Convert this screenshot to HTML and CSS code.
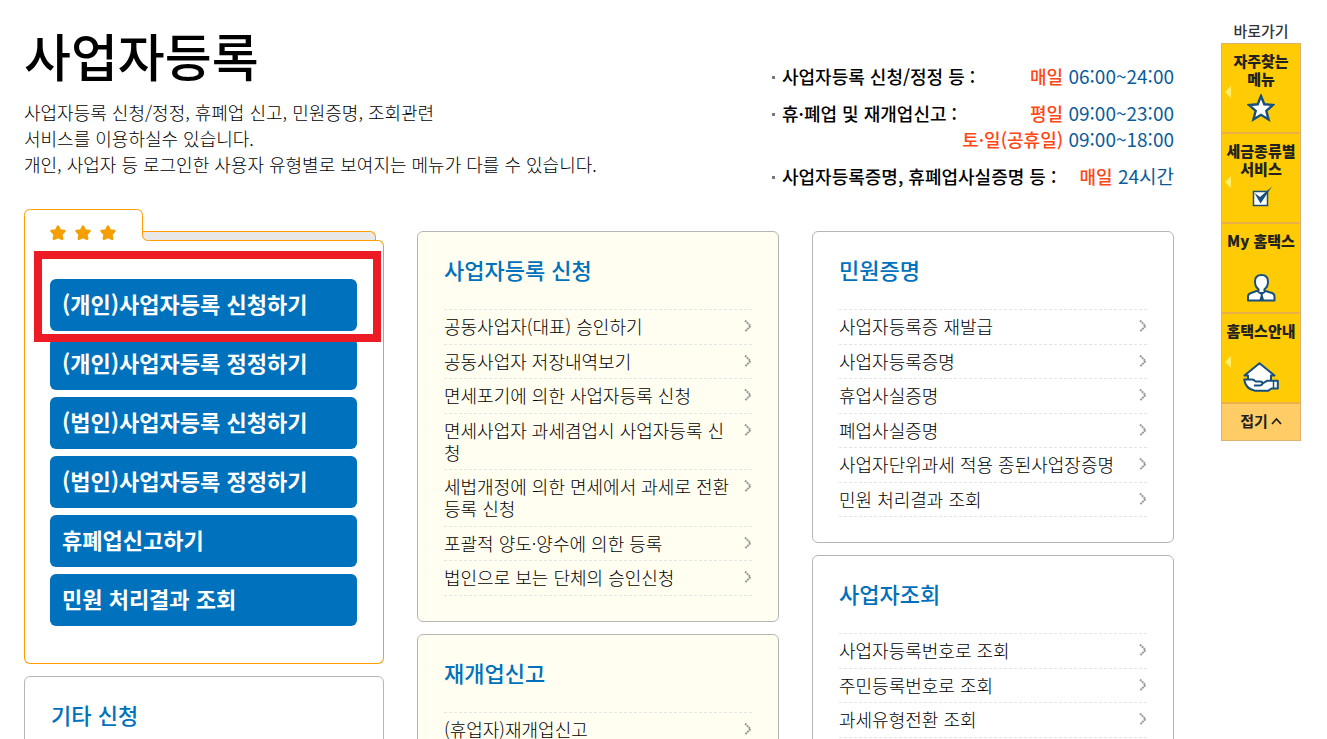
FILE: index.html
```html
<!DOCTYPE html>
<html lang="ko">
<head>
<meta charset="utf-8">
<meta name="viewport" content="width=device-width, initial-scale=1">
<title>사업자등록</title>
<link rel="stylesheet" href="styles.css">
</head>
<body>
<svg class="defs" aria-hidden="true">
  <symbol id="chevron" viewBox="0 0 8 14"><path d="M1 1.500 6.500 7 1 12.500" fill="none" stroke="#999" stroke-width="2" stroke-dasharray="2 .6"/></symbol>
  <symbol id="star" viewBox="0 0 18 18"><path d="M9 2.500 11 6.500 15.500 7 12.300 10.300 13.200 14.800 9 12.800 4.800 14.800 5.700 10.300 2.500 7 7 6.500Z" fill="#ff9c00" stroke="#f0a000" stroke-width="2.500" stroke-linejoin="round"/></symbol>
</svg>
<div class="page">
  <main class="main">
    <header class="intro">
      <div>
        <h1 class="title">사업자등록</h1>
        <p class="desc">사업자등록 신청/정정, 휴폐업 신고, 민원증명, 조회관련<br>서비스를 이용하실수 있습니다.<br>개인, 사업자 등 로그인한 사용자 유형별로 보여지는 메뉴가 다를 수 있습니다.</p>
      </div>
      <ul class="hours">
        <li><span class="hours-name">사업자등록 신청/정정 등 :</span><span class="hours-time"><em>매일</em> 06:00~24:00</span></li>
        <li><span class="hours-name">휴·폐업 및 재개업신고 :</span><span class="hours-time"><em>평일</em> 09:00~23:00</span><span class="hours-time wide"><em>토·일(공휴일)</em> 09:00~18:00</span></li>
        <li><span class="hours-name">사업자등록증명, 휴폐업사실증명 등 :</span><span class="hours-time"><em>매일</em> 24시간</span></li>
      </ul>
    </header>
    <div class="columns">
      <div class="column">
        <section class="folder">
          <div class="folder-top">
            <div class="folder-tab">
              <svg class="tab-shape" width="126" height="38" viewBox="0 0 126 38" aria-hidden="true">
                <path d="M118.500 23H126V31H123Q118.500 31 118.500 26Z" fill="#e8e8e8"/>
                <path d="M118.500 22.500H126" stroke="#ff9c00"/>
                <path d="M.5 38V6.500Q.5.5 6.500.5H112.500Q118.500.5 118.500 6.500V25.500Q118.500 31.500 124.500 31.500H126" fill="none" stroke="#ff9c00"/>
              </svg>
              <span class="stars">
                <svg width="18" height="18"><use href="#star"/></svg>
                <svg width="18" height="18"><use href="#star"/></svg>
                <svg width="18" height="18"><use href="#star"/></svg>
              </span>
            </div>
            <div class="folder-rim"><div class="folder-back"></div><div class="folder-edge"></div></div>
          </div>
          <div class="folder-body">
            <div class="highlight"><button type="button" class="action">(개인)사업자등록 신청하기</button></div>
            <button type="button" class="action">(개인)사업자등록 정정하기</button>
            <button type="button" class="action">(법인)사업자등록 신청하기</button>
            <button type="button" class="action">(법인)사업자등록 정정하기</button>
            <button type="button" class="action">휴폐업신고하기</button>
            <button type="button" class="action">민원 처리결과 조회</button>
          </div>
        </section>
        <section class="card">
          <h2 class="card-title">기타 신청</h2>
        </section>
      </div>
      <div class="column offset">
        <section class="card cream">
          <h2 class="card-title">사업자등록 신청</h2>
          <ul class="links">
            <li><a href="#">공동사업자(대표) 승인하기</a><svg class="chevron"><use href="#chevron"/></svg></li>
            <li><a href="#">공동사업자 저장내역보기</a><svg class="chevron"><use href="#chevron"/></svg></li>
            <li><a href="#">면세포기에 의한 사업자등록 신청</a><svg class="chevron"><use href="#chevron"/></svg></li>
            <li><a href="#">면세사업자 과세겸업시 사업자등록 신청</a><svg class="chevron"><use href="#chevron"/></svg></li>
            <li><a href="#">세법개정에 의한 면세에서 과세로 전환 등록 신청</a><svg class="chevron"><use href="#chevron"/></svg></li>
            <li><a href="#">포괄적 양도·양수에 의한 등록</a><svg class="chevron"><use href="#chevron"/></svg></li>
            <li><a href="#">법인으로 보는 단체의 승인신청</a><svg class="chevron"><use href="#chevron"/></svg></li>
          </ul>
        </section>
        <section class="card cream">
          <h2 class="card-title">재개업신고</h2>
          <ul class="links">
            <li><a href="#">(휴업자)재개업신고</a><svg class="chevron"><use href="#chevron"/></svg></li>
          </ul>
        </section>
      </div>
      <div class="column offset">
        <section class="card">
          <h2 class="card-title">민원증명</h2>
          <ul class="links">
            <li><a href="#">사업자등록증 재발급</a><svg class="chevron"><use href="#chevron"/></svg></li>
            <li><a href="#">사업자등록증명</a><svg class="chevron"><use href="#chevron"/></svg></li>
            <li><a href="#">휴업사실증명</a><svg class="chevron"><use href="#chevron"/></svg></li>
            <li><a href="#">폐업사실증명</a><svg class="chevron"><use href="#chevron"/></svg></li>
            <li><a href="#">사업자단위과세 적용 종된사업장증명</a><svg class="chevron"><use href="#chevron"/></svg></li>
            <li><a href="#">민원 처리결과 조회</a><svg class="chevron"><use href="#chevron"/></svg></li>
          </ul>
        </section>
        <section class="card">
          <h2 class="card-title">사업자조회</h2>
          <ul class="links">
            <li><a href="#">사업자등록번호로 조회</a><svg class="chevron"><use href="#chevron"/></svg></li>
            <li><a href="#">주민등록번호로 조회</a><svg class="chevron"><use href="#chevron"/></svg></li>
            <li><a href="#">과세유형전환 조회</a><svg class="chevron"><use href="#chevron"/></svg></li>
          </ul>
        </section>
      </div>
    </div>
  </main>
  <aside class="quick">
    <h2 class="quick-title">바로가기</h2>
    <nav class="quick-menu">
      <a href="#" class="quick-item more">
        <span>자주찾는<br>메뉴</span>
        <svg width="28" height="28" viewBox="0 0 28 28" aria-hidden="true"><path d="M14 2 17.300 10.300 26 11 19.300 16.800 21.600 25.500 14 20.800 6.400 25.500 8.700 16.800 2 11 10.700 10.300Z" fill="#fff" stroke="#17507c" stroke-width="2.400"/></svg>
      </a>
      <a href="#" class="quick-item more">
        <span>세금종류별<br>서비스</span>
        <svg width="28" height="28" viewBox="0 0 28 28" aria-hidden="true"><path d="M6.500 7.500H20.500V21.500H6.500Z" fill="#fff" stroke="#17507c" stroke-width="1.500"/><path d="M7.500 9 13 13 25 2.500 13.500 19.500Z" fill="#17507c"/></svg>
      </a>
      <a href="#" class="quick-item">
        <span>My 홈택스</span>
        <svg width="30" height="28" viewBox="0 0 30 28" aria-hidden="true"><g fill="#fff" stroke="#17507c" stroke-width="2" stroke-linejoin="round"><path d="M2 26.500V22.500Q2 20 5 19L12 16.500H18L26 19Q28.500 20 28.500 22.500V26.500Z"/><path d="M15.500 1Q22 1 22 7.500 22 13 18.500 15V18L15.500 20 12.500 18V15Q9 13 9 7.500 9 1 15.500 1Z"/></g><path d="M13.500 18H17.500L16.500 20.500 18 26H13.500L15 20.500Z" fill="#17507c"/></svg>
      </a>
      <a href="#" class="quick-item more">
        <span>홈택스안내</span>
        <svg width="36" height="30" viewBox="0 0 36 30" aria-hidden="true"><g fill="#fff" stroke="#17507c" stroke-width="2" stroke-linejoin="round"><path d="M5 22V13.500H1.500L16.500 1.200 31.500 13.500H28V22Z"/><path d="M1.200 17.500H9Q11 17.500 12.500 19.500H17Q19.500 19.500 19.500 21.500L24 18.800H34.800V26.500H28.500L25 28.800H12Q2.500 27 1.200 17.500Z"/><path d="M19.500 21.500Q19 23.500 16.500 23.500H11" fill="none"/></g><path d="M30.500 19V26" stroke="#17507c" stroke-width="1.500"/></svg>
      </a>
      <button type="button" class="quick-fold">접기<svg width="11" height="8" viewBox="0 0 11 8" aria-hidden="true"><path d="M1 7 5.500 2 10 7" fill="none" stroke="#222" stroke-width="1.800"/></svg></button>
    </nav>
  </aside>
</div>
</body>
</html>
```

FILE: styles.css
```css
* { box-sizing: border-box; }

body {
  margin: 0;
  background: #fff;
  color: #000;
  font: 300 18px/22px "Noto Sans CJK KR", sans-serif;
}

h1, h2, p, ul { margin: 0; padding: 0; }
ul { list-style: none; }
a { color: inherit; text-decoration: none; }
button { font-family: inherit; cursor: pointer; }
svg { display: block; }
.defs { position: absolute; width: 0; height: 0; }

.page {
  display: flex;
  gap: 47px;
  padding: 0 26px 0 24px;
}

.main { flex: 1; min-width: 0; padding: 22px 0 40px; }

/* Page heading and service hours */
.intro {
  display: flex;
  justify-content: space-between;
  align-items: flex-start;
  gap: 24px;
  margin-bottom: 20px;
}
.title { font-size: 51px; line-height: 66px; font-weight: 500; }
.desc { margin-top: 11px; line-height: 26px; }

.hours {
  display: grid;
  gap: 11px;
  margin-top: 41px;
  width: 402px;
  line-height: 26px;
  font-weight: 500;
}
.hours li { display: flex; flex-wrap: wrap; justify-content: space-between; }
.hours-name::before {
  content: "";
  display: inline-block;
  width: 3px;
  height: 3px;
  margin: 0 7px 3px 0;
  background: #777;
  vertical-align: middle;
}
.hours-time { color: #0b5c99; font-size: 19px; font-weight: 400; }
.hours-time em { color: #ff4713; font-size: 18px; font-style: normal; font-weight: 500; }
.wide { width: 100%; text-align: right; }

/* Card columns */
.columns {
  display: grid;
  grid-template-columns: 360fr 362fr 362fr;
  gap: 33px;
}
.column { display: flex; flex-direction: column; gap: 12px; min-width: 0; }
.column > :last-child { flex: 1; }
.offset { padding-top: 22px; }

.card {
  padding: 23px 26px 25px;
  border: 1px solid #b5b5b5;
  border-radius: 6px;
  background: #fff;
}
.cream { background: #fffef0; }
.card-title {
  margin-bottom: 26px;
  color: #0071bc;
  font-size: 22px;
  line-height: 28px;
  font-weight: 500;
}

.links { border-top: 1px dashed #e5e5e5; }
.links li {
  display: flex;
  justify-content: space-between;
  align-items: flex-start;
  gap: 12px;
  padding: 5px 0 7px;
  border-bottom: 1px dashed #e5e5e5;
}
.links li:nth-child(even) { padding-bottom: 6px; }
.chevron { flex: none; width: 8px; height: 14px; margin-top: 4px; }

/* Folder panel */
.folder-top { display: flex; }
.folder-tab { position: relative; flex: none; }
.stars { position: absolute; left: 25px; top: 15px; display: flex; gap: 7px; }
.folder-rim { flex: 1; display: flex; flex-direction: column; padding-top: 22px; }
.folder-back {
  height: 9px;
  margin-right: 8px;
  border: 1px solid #ff9c00;
  border-width: 1px 1px 0 0;
  border-top-right-radius: 6px;
  background: #e8e8e8;
}
.folder-edge {
  flex: 1;
  border: 1px solid #ff9c00;
  border-width: 1px 1px 0 0;
  border-top-right-radius: 6px;
}
.folder-body {
  display: grid;
  gap: 7px;
  padding: 32px 26px 37px 25px;
  border: 1px solid #ff9c00;
  border-top: 0;
  border-radius: 0 0 6px 6px;
}
.action {
  width: 100%;
  height: 52px;
  padding: 0 12px 4px;
  border: 0;
  border-radius: 6px;
  background: #0071bc;
  color: #fff;
  font-size: 22px;
  font-weight: 700;
  text-align: left;
}
.highlight { position: relative; }
.highlight::after {
  content: "";
  position: absolute;
  inset: -28px -24px -11px -16px;
  border: 8px solid #ed1c24;
  pointer-events: none;
}

/* Quick menu */
.quick { flex: none; width: 80px; padding-top: 20px; }
.quick-title {
  margin-bottom: 1px;
  color: #333;
  font-size: 15px;
  line-height: 22px;
  font-weight: 500;
  text-align: center;
}
.quick-menu { border: 1px solid #e0b070; background: #ffcb05; }
.quick-item {
  position: relative;
  display: flex;
  flex-direction: column;
  justify-content: space-between;
  align-items: center;
  height: 90px;
  padding: 8px 0 10px;
  border-bottom: 2px solid #eab14a;
  color: #222;
  font-size: 15px;
  line-height: 18px;
  font-weight: 900;
  text-align: center;
  white-space: nowrap;
}
.more::before {
  content: "";
  position: absolute;
  left: 3px;
  top: 42px;
  border: 6px solid transparent;
  border-left: 0;
  border-right-color: #ffee66;
}
.quick-fold {
  display: flex;
  justify-content: center;
  align-items: center;
  gap: 3px;
  width: 100%;
  height: 36px;
  padding: 0 0 3px;
  border: 0;
  background: #ffcc66;
  color: #222;
  font-size: 15px;
  font-weight: 700;
}
```
